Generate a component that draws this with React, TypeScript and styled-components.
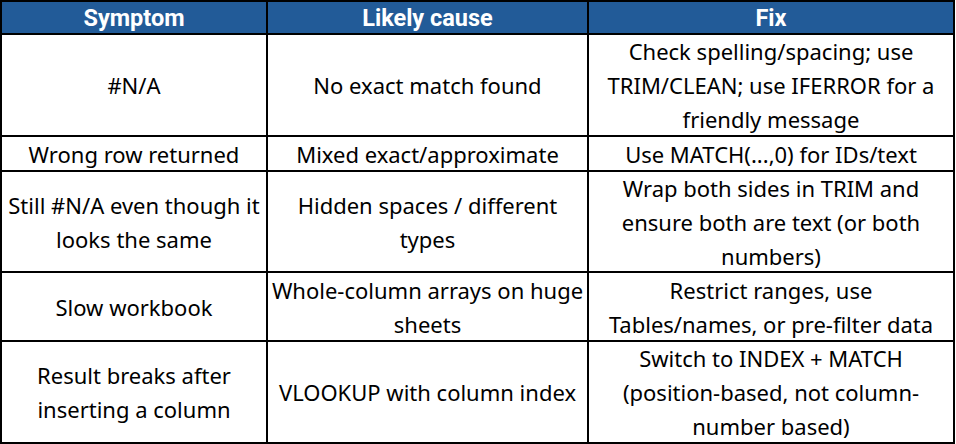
import React from "react";
import styled, { createGlobalStyle } from "styled-components";

const GlobalStyle = createGlobalStyle`
  html, body {
    margin: 0;
    padding: 0;
    background: #ffffff;
  }
`;

const Table = styled.div`
  display: grid;
  grid-template-columns: 266px 321px 366px;
  width: 955px;
  border-top: 2px solid #000;
  border-left: 2px solid #000;
  box-sizing: border-box;
  font-family: "Noto Sans", "Liberation Sans", sans-serif;
  color: #000;
`;

const HeadCell = styled.div`
  background: #225b98;
  color: #ffffff;
  font-family: Roboto, "Liberation Sans", sans-serif;
  font-weight: 700;
  font-size: 23.5px;
  height: 33px;
  display: flex;
  align-items: center;
  justify-content: center;
  border-right: 2px solid #000;
  border-bottom: 2px solid #000;
  box-sizing: border-box;
`;

const Cell = styled.div<{ $h: number }>`
  height: ${(p) => p.$h}px;
  display: flex;
  flex-direction: column;
  align-items: center;
  justify-content: center;
  text-align: center;
  font-size: 22px;
  line-height: 34px;
  border-right: 2px solid #000;
  border-bottom: 2px solid #000;
  box-sizing: border-box;
  white-space: nowrap;
`;

const Line = styled.span`
  display: block;
`;

type Row = { h: number; cells: string[][] };

const rows: Row[] = [
  {
    h: 102,
    cells: [
      ["#N/A"],
      ["No exact match found"],
      ["Check spelling/spacing; use", "TRIM/CLEAN; use IFERROR for a", "friendly message"],
    ],
  },
  {
    h: 35,
    cells: [["Wrong row returned"], ["Mixed exact/approximate"], ["Use MATCH(...,0) for IDs/text"]],
  },
  {
    h: 101,
    cells: [
      ["Still #N/A even though it", "looks the same"],
      ["Hidden spaces / different", "types"],
      ["Wrap both sides in TRIM and", "ensure both are text (or both", "numbers)"],
    ],
  },
  {
    h: 69,
    cells: [
      ["Slow workbook"],
      ["Whole-column arrays on huge", "sheets"],
      ["Restrict ranges, use", "Tables/names, or pre-filter data"],
    ],
  },
  {
    h: 102,
    cells: [
      ["Result breaks after", "inserting a column"],
      ["VLOOKUP with column index"],
      ["Switch to INDEX + MATCH", "(position-based, not column-", "number based)"],
    ],
  },
];

export default function App() {
  return (
    <>
      <GlobalStyle />
      <Table>
        <HeadCell>Symptom</HeadCell>
        <HeadCell>Likely cause</HeadCell>
        <HeadCell>Fix</HeadCell>
        {rows.map((row, i) =>
          row.cells.map((lines, j) => (
            <Cell key={`${i}-${j}`} $h={row.h}>
              {lines.map((l, k) => (
                <Line key={k}>{l}</Line>
              ))}
            </Cell>
          ))
        )}
      </Table>
    </>
  );
}
